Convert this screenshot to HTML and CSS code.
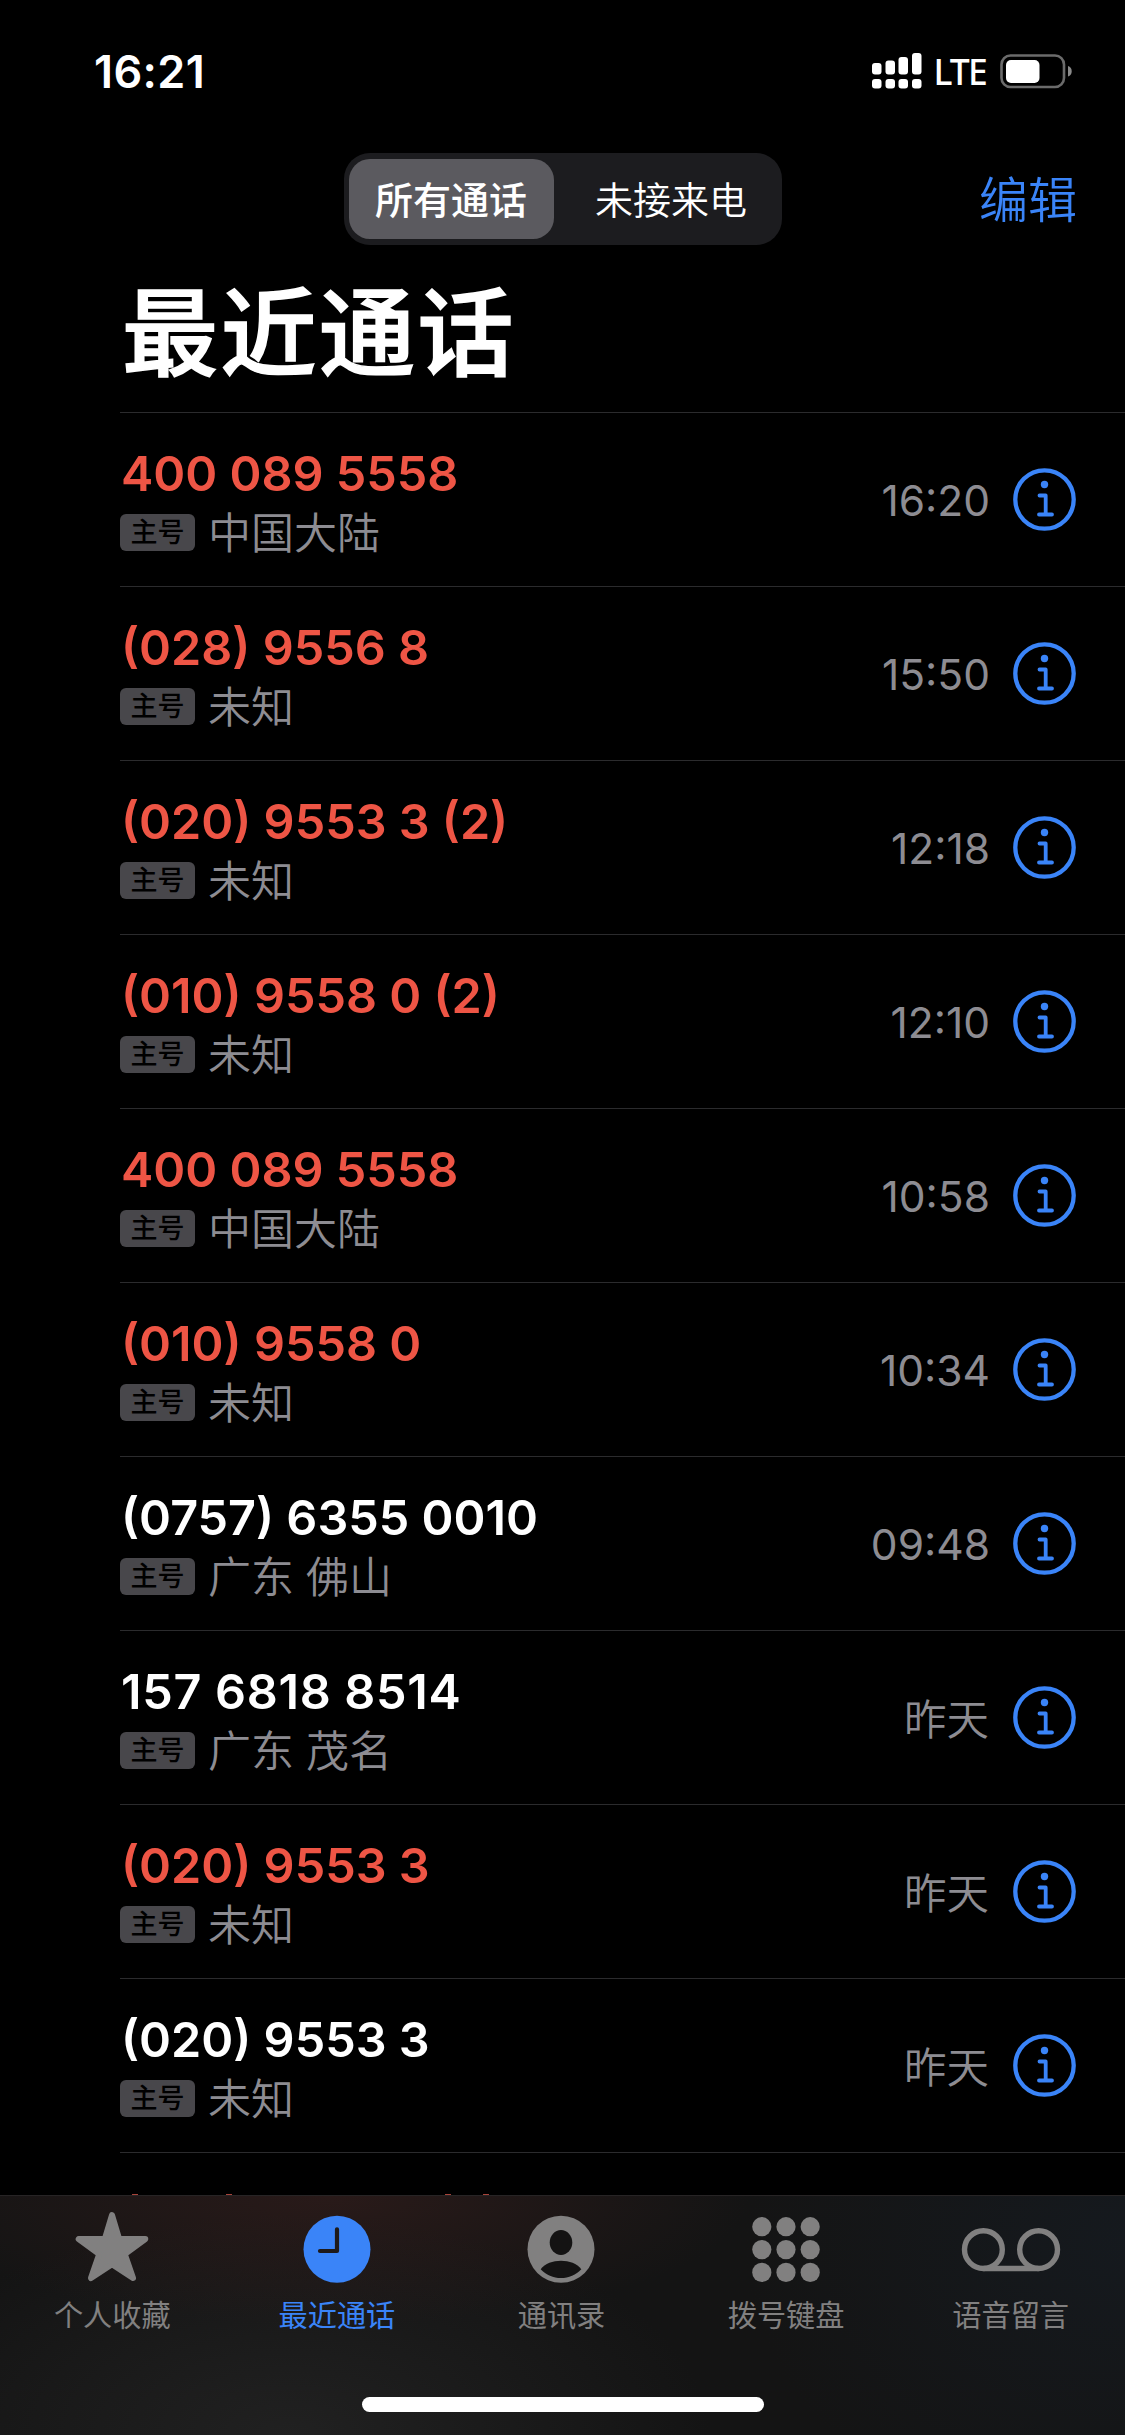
FILE: index.html
```html
<!DOCTYPE html>
<html lang="zh-CN">
<head>
    <meta charset="UTF-8">
    <title>最近通话</title>
    <link rel="stylesheet" href="styles.css">
</head>
<body>
    <div class="phone">
        <header class="status-bar">
            <span class="clock">16:21</span>
            <div class="status-icons">
                <svg class="signal" width="50" height="36" viewBox="0 0 50 36" fill="#fff">
                    <rect x="0" y="10" width="9.5" height="11.5" rx="3"/>
                    <rect x="13.5" y="7.5" width="9.5" height="14" rx="3"/>
                    <rect x="26.5" y="4" width="9.5" height="17.5" rx="3"/>
                    <rect x="40" y="0" width="9.5" height="21.5" rx="3"/>
                    <rect x="0" y="26" width="9.5" height="9.5" rx="3"/>
                    <rect x="13.5" y="26" width="9.5" height="9.5" rx="3"/>
                    <rect x="26.5" y="26" width="9.5" height="9.5" rx="3"/>
                    <rect x="40" y="26" width="9.5" height="9.5" rx="3"/>
                </svg>
                <span class="network">LTE</span>
                <svg class="battery" width="73" height="35" viewBox="0 0 73 35">
                    <rect x="1.5" y="1.5" width="62.5" height="31.5" rx="9" fill="none" stroke="#6b6b6b" stroke-width="2.6"/>
                    <rect x="6" y="6" width="33.5" height="23" rx="5" fill="#fff"/>
                    <path d="M68 12c5 1.5 5 9 0 10.500z" fill="#8a8a8a"/>
                </svg>
            </div>
        </header>

        <nav class="nav-bar">
            <div class="segmented">
                <button class="segment active">所有通话</button>
                <button class="segment">未接来电</button>
            </div>
            <a class="edit-btn">编辑</a>
        </nav>

        <h1 class="title">最近通话</h1>

        <ul id="callList" class="call-list"></ul>

        <footer class="tab-bar">
            <div class="tabs">
                <div class="tab">
                    <svg width="76" height="76" viewBox="0 0 76 76">
                        <path d="M38 6L45.200 30H71.300L50.800 45.200L59 69L38 55.300L17 69L25.200 45.200L4.700 30H30.800Z" fill="currentColor" stroke="currentColor" stroke-width="6" stroke-linejoin="round"/>
                    </svg>
                    <span>个人收藏</span>
                </div>
                <div class="tab selected">
                    <svg width="76" height="76" viewBox="0 0 76 76">
                        <circle cx="38" cy="40.300" r="33.500" fill="currentColor"/>
                        <path d="M38 20.300V42H21" fill="none" stroke="#1e1a1a" stroke-width="4.200" stroke-linecap="round" stroke-linejoin="round"/>
                    </svg>
                    <span>最近通话</span>
                </div>
                <div class="tab">
                    <svg width="76" height="76" viewBox="0 0 76 76">
                        <circle cx="38" cy="40.300" r="33.500" fill="currentColor"/>
                        <ellipse cx="38" cy="33.500" rx="11.300" ry="12.500" fill="#141313"/>
                        <path d="M17.700 60.300C26 49 50 49 58.300 60.300C48 72 28 72 17.700 60.300Z" fill="#141313"/>
                    </svg>
                    <span>通讯录</span>
                </div>
                <div class="tab">
                    <svg width="76" height="76" viewBox="0 0 76 76" fill="currentColor">
                        <circle cx="13.800" cy="17.700" r="9.600"/><circle cx="38" cy="17.700" r="9.600"/><circle cx="62.200" cy="17.700" r="9.600"/>
                        <circle cx="13.800" cy="40.600" r="9.600"/><circle cx="38" cy="40.600" r="9.600"/><circle cx="62.200" cy="40.600" r="9.600"/>
                        <circle cx="13.800" cy="63.400" r="9.600"/><circle cx="38" cy="63.400" r="9.600"/><circle cx="62.200" cy="63.400" r="9.600"/>
                    </svg>
                    <span>拨号键盘</span>
                </div>
                <div class="tab">
                    <svg width="100" height="76" viewBox="0 0 100 76" fill="none" stroke="currentColor" stroke-width="5.400">
                        <circle cx="22.400" cy="40.600" r="18.900"/>
                        <circle cx="77.600" cy="40.600" r="18.900"/>
                        <path d="M22.400 59.500H77.600"/>
                    </svg>
                    <span>语音留言</span>
                </div>
            </div>
            <div class="home-indicator"></div>
        </footer>
    </div>

    <script>
        const llamadas = [
            { numero: '400 089 5558', lugar: '中国大陆', hora: '16:20', perdida: true },
            { numero: '(028) 9556 8', lugar: '未知', hora: '15:50', perdida: true },
            { numero: '(020) 9553 3 (2)', lugar: '未知', hora: '12:18', perdida: true },
            { numero: '(010) 9558 0 (2)', lugar: '未知', hora: '12:10', perdida: true },
            { numero: '400 089 5558', lugar: '中国大陆', hora: '10:58', perdida: true },
            { numero: '(010) 9558 0', lugar: '未知', hora: '10:34', perdida: true },
            { numero: '(0757) 6355 0010', lugar: '广东 佛山', hora: '09:48', perdida: false },
            { numero: '157 6818 8514', lugar: '广东 茂名', hora: '昨天', perdida: false, movil: true },
            { numero: '(020) 9553 3', lugar: '未知', hora: '昨天', perdida: true },
            { numero: '(020) 9553 3', lugar: '未知', hora: '昨天', perdida: false }
        ];

        const lista = document.getElementById('callList');

        llamadas.forEach(llamada => {
            const li = document.createElement('li');
            li.classList.add('call-item');
            if (llamada.perdida) li.classList.add('missed');
            if (llamada.movil) li.classList.add('mobile');

            li.innerHTML = `
                <div class="call-info">
                    <div class="number">${llamada.numero}</div>
                    <div class="place"><span class="badge">主号</span><span>${llamada.lugar}</span></div>
                </div>
                <span class="time ${llamada.hora === '昨天' ? 'day' : ''}">${llamada.hora}</span>
                <svg class="info-icon" width="64" height="64" viewBox="0 0 64 64" fill="none" stroke="#3a84f8">
                    <circle cx="31.5" cy="31.5" r="29.2" stroke-width="4.3"/>
                    <circle cx="31.5" cy="16.500" r="3.7" fill="#3a84f8" stroke="none"/>
                    <path d="M26.500 27.500H32.700V46.500M26 46.500H39" stroke-width="3.800" stroke-linecap="round" stroke-linejoin="round"/>
                </svg>
            `;

            lista.appendChild(li);
        });

        // La siguiente llamada queda debajo de la barra inferior
        const siguiente = document.createElement('li');
        siguiente.className = 'call-item missed next';
        siguiente.innerHTML = '<i></i><i></i><i></i><i></i>';
        lista.appendChild(siguiente);
    </script>
</body>
</html>
```
FILE: styles.css
```css
body {
    margin: 0;
    background-color: #000;
    color: #fff;
    font-family: Inter, "Noto Sans CJK SC", sans-serif;
}

.phone {
    display: flex;
    flex-direction: column;
    width: 1125px;
    height: 2435px;
    overflow: hidden;
}

/* Barra de estado */
.status-bar {
    display: flex;
    justify-content: space-between;
    align-items: center;
    height: 145px;
    padding: 0 52px 3px 94px;
    box-sizing: border-box;
    flex-shrink: 0;
}

.clock {
    font-size: 45px;
    font-weight: 600;
    letter-spacing: 0.4px;
}

.status-icons {
    display: flex;
    align-items: center;
}

.network {
    margin: 0 14px 0 11px;
    font-family: "Noto Sans", sans-serif;
    font-size: 35.5px;
    line-height: 36px;
    font-weight: 500;
    letter-spacing: -1.8px;
}

/* Barra de navegacion */
.nav-bar {
    display: grid;
    grid-template-columns: 1fr auto 1fr;
    align-items: center;
    height: 108px;
    padding-right: 48px;
    padding-left: 48px;
    flex-shrink: 0;
}

.segmented {
    display: flex;
    grid-column: 2;
    width: 438px;
    height: 92px;
    padding: 6px 5px;
    box-sizing: border-box;
    border-radius: 26px;
    background-color: #1c1c1f;
}

.segment {
    flex: 1;
    padding: 0 0 4px 12px;
    border: none;
    border-radius: 21px;
    background: none;
    color: #fff;
    font-family: "Noto Sans CJK SC", sans-serif;
    font-size: 38px;
    font-weight: 350;
}

.segment.active {
    flex: 0 0 205px;
    padding-left: 0;
    background-color: #5b5a5f;
    font-weight: 500;
}

.edit-btn {
    justify-self: end;
    padding-bottom: 6px;
    color: #3a84f8;
    font-size: 49px;
    font-weight: 350;
}

.title {
    height: 159px;
    margin: 0;
    padding-left: 122px;
    font-size: 96px;
    line-height: 160px;
    font-weight: 500;
    letter-spacing: 2.5px;
    -webkit-text-stroke: 1.6px #fff;
    flex-shrink: 0;
}

/* Lista de llamadas */
.call-list {
    height: 1783px;
    margin: 0;
    padding: 0 0 0 120px;
    overflow: hidden;
    list-style-type: none;
    flex-shrink: 0;
}

.call-item {
    display: flex;
    align-items: center;
    height: 174px;
    padding-right: 48px;
    box-sizing: border-box;
    border-top: 1px solid #2b2b2d;
}

.call-info {
    flex-grow: 1;
    padding-top: 7px;
}

.number {
    padding: 1px 0 0 1px;
    font-size: 48.5px;
    line-height: 59px;
    font-weight: 600;
}

.missed .number {
    color: #ee5545;
}

.mobile .number {
    letter-spacing: 0.7px;
}

.place {
    display: flex;
    align-items: center;
    gap: 13px;
    height: 60px;
    color: #8d8c92;
    font-size: 43px;
    line-height: 60px;
    font-weight: 350;
}

.badge {
    height: 37px;
    width: 75px;
    margin-bottom: 2px;
    border-radius: 6px;
    background-color: #48474b;
    color: #000;
    font-size: 27px;
    line-height: 38px;
    font-weight: 500;
    text-align: center;
}

.time {
    padding-top: 2px;
    margin-right: 23px;
    color: #8d8c92;
    font-size: 42.5px;
    font-weight: 400;
}

.time.day {
    padding: 0 1px 2px 0;
    font-weight: 350;
}

/* Solo asoman las puntas de los parentesis */
.next {
    align-items: flex-start;
    padding: 41px 0 0 12px;
}

.next i {
    width: 6px;
    height: 2px;
    background-color: #a8443a;
}

.next i:nth-child(2) {
    margin-left: 88px;
}

.next i:nth-child(3) {
    margin-left: 213px;
}

.next i:nth-child(4) {
    margin-left: 32px;
}

/* Barra inferior */
.tab-bar {
    display: flex;
    flex-direction: column;
    align-items: center;
    justify-content: space-between;
    height: 240px;
    padding: 13px 0 23px;
    box-sizing: border-box;
    border-top: 1px solid #272425;
    background:
        radial-gradient(ellipse 420px 130px at 330px 0, rgba(62, 32, 30, 0.5), rgba(62, 32, 30, 0)),
        radial-gradient(ellipse 380px 300px at 100% 20%, rgba(22, 29, 37, 0.6), rgba(22, 29, 37, 0)),
        radial-gradient(ellipse 420px 220px at 290px 100%, rgba(36, 36, 36, 0.8), rgba(36, 36, 36, 0)),
        #141414;
    flex-shrink: 0;
}

.tabs {
    display: flex;
    width: 100%;
    padding-right: 2px;
    box-sizing: border-box;
}

.tab {
    display: flex;
    flex: 1;
    flex-direction: column;
    align-items: center;
    color: #818080;
    font-size: 29.2px;
    line-height: 40px;
    font-weight: 400;
}

.tab span {
    margin-top: 11px;
}

.tab.selected {
    color: #3a84f8;
}

.home-indicator {
    width: 402px;
    height: 15px;
    border-radius: 8px;
    background-color: #fff;
}
```
